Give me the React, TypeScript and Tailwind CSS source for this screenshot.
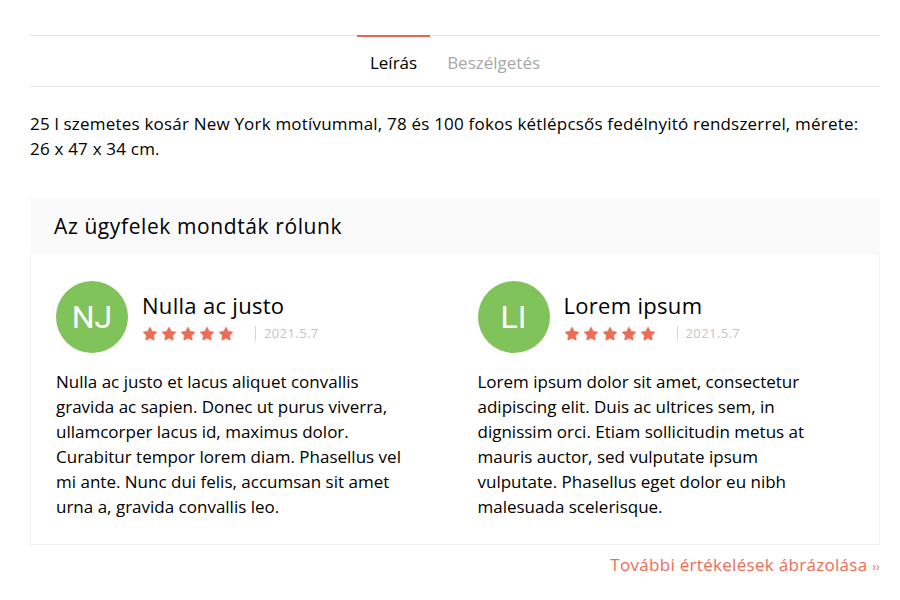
import { Star } from 'lucide-react'

const reviews = [
  {
    initials: 'NJ',
    name: 'Nulla ac justo',
    date: '2021.5.7',
    text: 'Nulla ac justo et lacus aliquet convallis gravida ac sapien. Donec ut purus viverra, ullamcorper lacus id, maximus dolor. Curabitur tempor lorem diam. Phasellus vel mi ante. Nunc dui felis, accumsan sit amet urna a, gravida convallis leo.',
  },
  {
    initials: 'LI',
    name: 'Lorem ipsum',
    date: '2021.5.7',
    text: 'Lorem ipsum dolor sit amet, consectetur adipiscing elit. Duis ac ultrices sem, in dignissim orci. Etiam sollicitudin metus at mauris auctor, sed vulputate ipsum vulputate. Phasellus eget dolor eu nibh malesuada scelerisque.',
  },
]

const ReviewCard = ({ review }: { review: (typeof reviews)[number] }) => {
  return (
    <div className="flex flex-col">
      <div className="flex items-center gap-[14px]">
        <div className="w-[72px] h-[72px] rounded-full bg-[#80c35a] flex items-center justify-center text-white text-[32px] font-['Roboto',sans-serif] shrink-0">
          {review.initials}
        </div>
        <div className="flex flex-col">
          <h4 className="text-[22px] leading-[28px] tracking-[0.3px] text-black">{review.name}</h4>
          <div className="flex items-center mt-[5px]">
            <div className="flex gap-[3px]">
              {[0, 1, 2, 3, 4].map((i) => (
                <Star key={i} size={16} className="fill-[#ec6d56] text-[#ec6d56]" strokeWidth={1} />
              ))}
            </div>
            <span className="ml-[21px] w-px h-[15px] bg-[#d6d6d6]" />
            <span className="ml-[8px] text-[13px] tracking-[0.4px] text-[#c4c4c4]">{review.date}</span>
          </div>
        </div>
      </div>
      <p className="mt-[16px] text-[17px] leading-[25px] text-black pr-[20px]">{review.text}</p>
    </div>
  )
}

export default function App() {
  return (
    <section className="bg-white w-[900px] h-[600px] pl-[30px] pr-[20px] pt-[35px] font-['Open_Sans',sans-serif]">
      <div className="border-t border-[#e5e5e5] border-b flex justify-center gap-[4px] h-[52px]">
        <button className="relative text-[17px] text-black px-[13px] pt-[2px] leading-[25px]">
          <span className="absolute -top-px left-0 right-0 h-[2px] bg-[#e8664f]" />
          Leírás
        </button>
        <button className="text-[17px] text-[#a8a8a8] px-[13px] pt-[2px] leading-[25px]">Beszélgetés</button>
      </div>

      <p className="mt-[24px] text-[17px] leading-[25px] tracking-[0.2px] text-black">
        25 l szemetes kosár New York motívummal, 78 és 100 fokos kétlépcsős fedélnyitó rendszerrel, mérete:
        26 x 47 x 34 cm.
      </p>

      <div className="mt-[37px]">
        <div className="bg-[#fafafa] h-[57px] flex items-center px-[24px]">
          <h3 className="text-[21px] tracking-[0.6px] text-black">Az ügyfelek mondták rólunk</h3>
        </div>
        <div className="border border-t-0 border-[#f0f0f0] grid grid-cols-2 gap-[45px] px-[25px] pt-[26px] pb-[25px]">
          {reviews.map((review) => (
            <ReviewCard key={review.name} review={review} />
          ))}
        </div>
      </div>

      <div className="flex justify-end mt-[7px]">
        <a href="#" className="text-[17px] tracking-[0.3px] text-[#ec6d56]">
          További értékelések ábrázolása <span className="text-[12px]">››</span>
        </a>
      </div>
    </section>
  )
}
